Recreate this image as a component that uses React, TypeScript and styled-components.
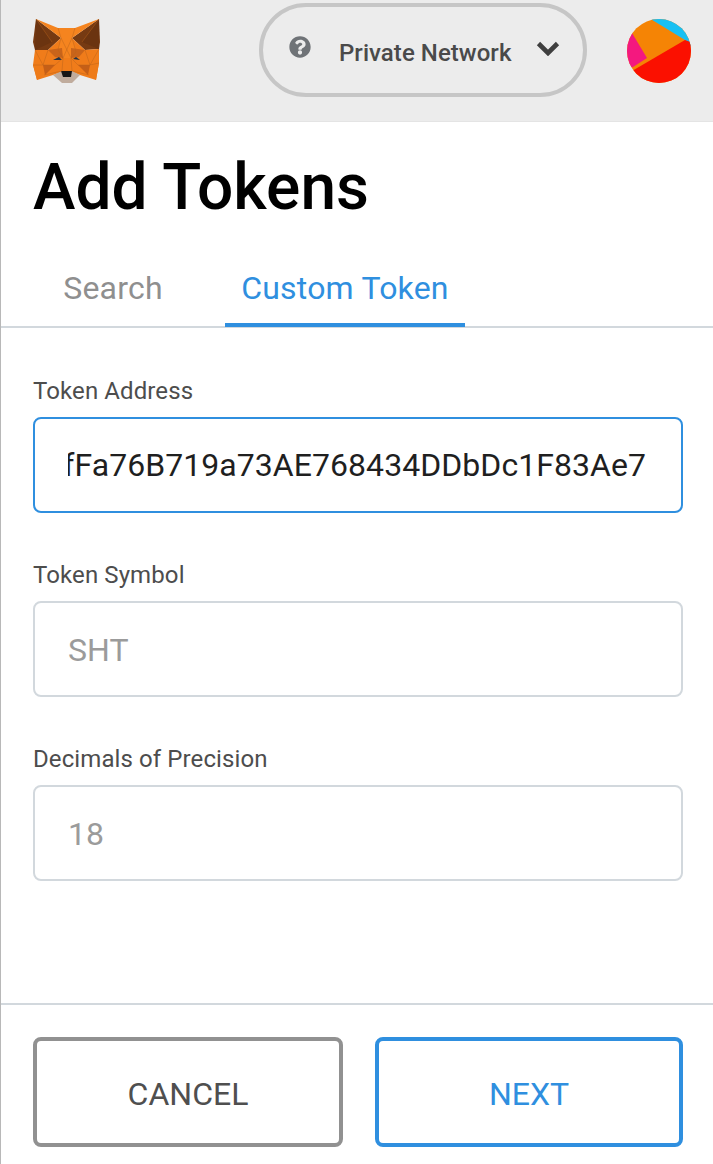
import React from "react";
import styled, { createGlobalStyle } from "styled-components";

const Global = createGlobalStyle`
  html, body { margin: 0; padding: 0; background: #fff; }
  * { box-sizing: border-box; }
  body { font-family: Roboto, "Liberation Sans", sans-serif; }
`;
const Page = styled.div`
  width: 713px; height: 1164px; border-left: 1px solid #b8b8b8;
  display: flex; flex-direction: column; background: #fff; overflow: hidden;
`;
const Header = styled.header`
  height: 122px; flex: none; background: #ececec; display: flex; align-items: flex-start;
  border-bottom: 1px solid #e4e4e4;
`;
const Logo = styled.svg`
  width: 72px; height: 68px; margin: 17px 0 0 30px; flex: none;
`;
const NetworkPill = styled.div`
  width: 328px; height: 94px; margin: 3px 0 0 156px; flex: none;
  border: 4px solid #c6c6c6; border-radius: 47px;
  display: flex; align-items: center; padding-left: 26px; color: #4a4a4a;
`;
const NetworkName = styled.span`
  font-size: 24px; font-weight: 500; margin: 6px 0 0 28px; line-height: 28px; width: 196px; white-space: nowrap; color: #4a4a4a; letter-spacing: 0.05px;
`;
const Avatar = styled.svg`
  width: 64px; height: 64px; margin: 19px 0 0 40px; flex: none; border-radius: 50%;
`;
const Title = styled.h1`
  margin: 30px 0 0 32px; font-size: 64px; line-height: 72px; font-weight: 500; color: #000; letter-spacing: 0.05px;
`;
const Tabs = styled.nav`
  height: 104px; flex: none; display: flex; gap: 40px; align-items: flex-end; border-bottom: 2px solid #d2d8dd; padding-left: 40px;
`;
const Tab = styled.div<{ $active?: boolean; $w: number }>`
  width: ${(p) => p.$w}px; height: 76px; margin-bottom: -1px; display: flex; align-items: center; justify-content: center;
  padding-top: 2px; letter-spacing: 0.2px;
  font-size: 32px; color: ${(p) => (p.$active ? "#2f8fdf" : "#8f8f8f")};
  border-bottom: 4px solid ${(p) => (p.$active ? "#2f8fdf" : "transparent")};
`;
const Form = styled.main`
  flex: 1; display: flex; flex-direction: column; padding: 49px 30px 0 32px; gap: 48px;
`;
const Field = styled.div`
  display: flex; flex-direction: column; gap: 12px;
`;
const Label = styled.label`
  font-size: 24px; line-height: 28px; color: #4d4d4d; height: 28px; display: block; letter-spacing: 0.1px;
`;
const InputBox = styled.div<{ $focus?: boolean }>`
  height: 96px; border: 2px solid ${(p) => (p.$focus ? "#2f8fdf" : "#d2d8dd")}; border-radius: 8px;
  padding: 0 35px 0 33px; display: flex; align-items: center;
`;
const Clip = styled.div`
  width: 100%; overflow: hidden; display: flex; justify-content: flex-end; white-space: nowrap;
`;
const Value = styled.span<{ $muted?: boolean }>`
  font-size: 32px; line-height: 40px; flex: none; letter-spacing: 0.05px;
  margin-top: ${(p) => (p.$muted ? "2px" : "0")};
  color: ${(p) => (p.$muted ? "#9b9b9b" : "#1f1f1f")};
`;
const Footer = styled.footer`
  flex: none; height: 161px; border-top: 2px solid #d2d8dd; display: grid; grid-template-columns: 310px 308px; gap: 32px; padding: 32px 0 0 32px;
`;
const Button = styled.button<{ $primary?: boolean }>`
  height: 110px; background: #fff; border-radius: 8px; border: 4px solid ${(p) => (p.$primary ? "#2f8fdf" : "#919191")};
  color: ${(p) => (p.$primary ? "#2f8fdf" : "#4f4f4f")}; font: 400 32px Roboto, sans-serif; padding: 4px 0 0;
`;

const Fox = () => (
  <Logo viewBox="31 17 72 68">
    <polygon points="36,19 61,38 48,50 35,50 33,42" fill="#763a12" />
    <polygon points="99,19 72,38 85,50 99,49 100,42" fill="#763a12" />
    <polygon points="36,19 52,42 35,50" fill="#6b3410" />
    <polygon points="99,19 82,42 99,49" fill="#6b3410" />
    <polygon points="36,19 58,28 75,28 99,19 72,38 61,38" fill="#f5841f" />
    <polygon points="35,50 48,50 61,38 72,38 85,50 99,49 99,63 96,80 80,75 72,72 62,72 53,75 37,80 33,65" fill="#f07c1a" />
    <polygon points="61,38 72,38 76,52 72,58 62,58 58,50" fill="#f5841f" />
    <polygon points="48,50 62,48 63,58 55,57" fill="#c9641a" />
    <polygon points="85,50 71,48 71,58 79,57" fill="#c9641a" />
    <polygon points="33,65 43,65 55,65 44,75 37,80" fill="#ee7b19" />
    <polygon points="99,63 90,65 78,65 89,75 96,80" fill="#ee7b19" />
    <polygon points="43,65 55,65 45,75" fill="#c55f17" />
    <polygon points="90,65 78,65 88,75" fill="#c55f17" />
    <polygon points="53,60 59,57 62,60" fill="#233447" />
    <polygon points="73,59 76,57 80,60" fill="#233447" />
    <polygon points="53,75 62,71 72,71 80,75 72,83 62,83" fill="#c0ac9d" />
    <polygon points="61,71 72,71 71,77 63,77" fill="#161616" />
    <g stroke="#b8621a" strokeWidth=".45" fill="none">
      <path d="M36 19L52 42M99 19L82 42M61 38L58 50L63 58L62 71M72 38L76 52L71 58L72 71M58 28L61 38M75 28L72 38M61 38L71 58M72 38L63 58M35 50L43 65L33 65M99 49L90 65L99 63M48 50L43 65L55 65L63 58M85 50L90 65L78 65L71 58M44 75L62 71M89 75L72 71" />
    </g>
  </Logo>
);

const Question = () => (
  <svg width="22" height="22" viewBox="0 0 512 512" style={{ flex: "none", marginTop: -6 }}>
    <path fill="#6f7377" d="M504 256c0 137-111 248-248 248S8 393 8 256 119 8 256 8s248 111 248 248zM263 90c-54 0-89 23-116 63-4 5-3 12 3 16l35 26c5 4 13 3 17-2 18-23 31-36 58-36 22 0 48 14 48 34 0 16-13 24-34 36-24 14-57 31-57 75v6c0 7 5 12 12 12h56c7 0 12-5 12-12v-2c0-30 89-32 89-114 0-62-64-102-123-102zm-7 244c-27 0-49 22-49 49s22 49 49 49 49-22 49-49-22-49-49-49z" />
  </svg>
);

const Chevron = () => (
  <svg width="24" height="16" viewBox="0 0 24 16" style={{ flex: "none", marginTop: -4, marginLeft: 1 }}>
    <path d="M2.5 3.5L12 13L21.5 3.5" fill="none" stroke="#3f3f3f" strokeWidth="4.6" />
  </svg>
);

const Identicon = () => (
  <Avatar viewBox="0 0 64 64">
    <rect width="64" height="64" fill="#f58405" />
    <polygon points="22,-1 66,-1 66,30 58,21" fill="#18c0f3" />
    <polygon points="-1,8 5,14 20,39 6,48 -1,50" fill="#f4187f" />
    <polygon points="5,52 58,21 66,24 66,66 -1,66 -1,56" fill="#fb1000" />
  </Avatar>
);

export default function App() {
  return (
    <Page>
      <Global />
      <Header>
        <Fox />
        <NetworkPill>
          <Question />
          <NetworkName>Private Network</NetworkName>
          <Chevron />
        </NetworkPill>
        <Identicon />
      </Header>
      <Title>Add Tokens</Title>
      <Tabs>
        <Tab $w={144}>Search</Tab>
        <Tab $w={240} $active>Custom Token</Tab>
      </Tabs>
      <Form>
        <Field>
          <Label>Token Address</Label>
          <InputBox $focus>
            <Clip><Value>0xfFa76B719a73AE768434DDbDc1F83Ae7</Value></Clip>
          </InputBox>
        </Field>
        <Field>
          <Label>Token Symbol</Label>
          <InputBox><Value $muted>SHT</Value></InputBox>
        </Field>
        <Field>
          <Label>Decimals of Precision</Label>
          <InputBox><Value $muted>18</Value></InputBox>
        </Field>
      </Form>
      <Footer>
        <Button>CANCEL</Button>
        <Button $primary>NEXT</Button>
      </Footer>
    </Page>
  );
}
